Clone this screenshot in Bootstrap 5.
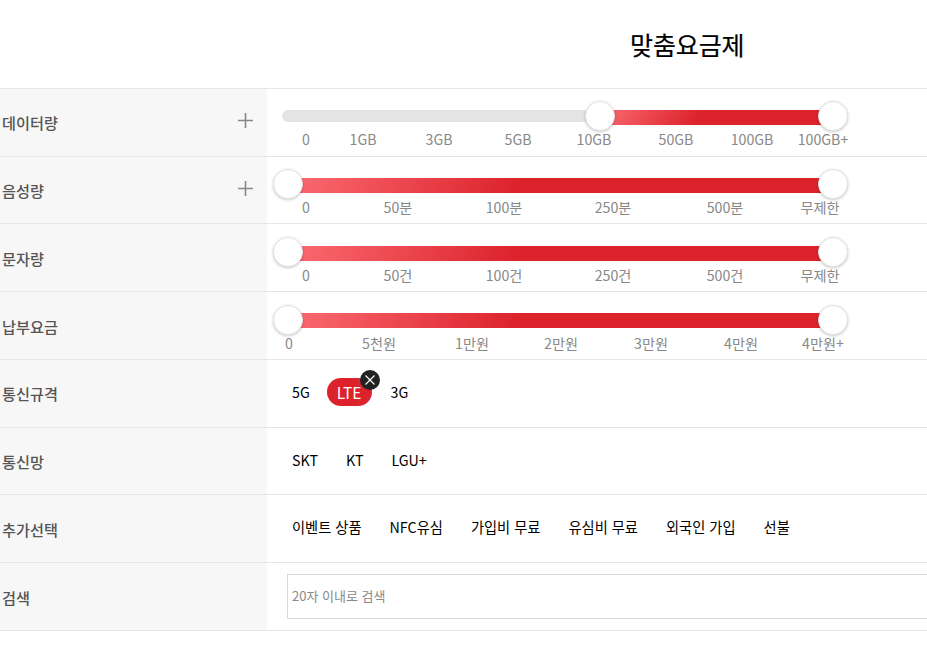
<!DOCTYPE html>
<html lang="ko"><head><meta charset="utf-8">
<link href="https://cdn.jsdelivr.net/npm/bootstrap@5.3.0/dist/css/bootstrap.min.css" rel="stylesheet">
<style>
html,body{height:658px;overflow:hidden;background:#fff}
body{font-family:"Noto Sans CJK KR","Noto Sans",sans-serif;color:#000}
.page-head{height:88.9px;border-bottom:1px solid #e6e6e6;padding-left:630px;padding-top:25px}
.page-title{font-size:25px;font-weight:400;line-height:38px;margin:0;letter-spacing:-.1px;-webkit-text-stroke:.2px #000}
.flt-row{height:67.75px;border-bottom:1px solid #e6e6e6;width:927px}
.flt-label{flex:0 0 267px;background:#f7f7f7;padding:1px 14px 0 2px;font-size:15.2px;font-weight:500;color:#555;height:100%}
.flt-label svg{display:block;margin-top:-5px}
.flt-body{flex:1 1 auto;min-width:0;height:100%;position:relative;overflow:hidden}
.slider{position:absolute;left:0;top:0;width:660px;height:100%}
.trk{position:absolute;height:15px;border-radius:8px}
.trk-bg{left:15px;width:330px;height:12px;background:#e4e4e4;border-radius:6px}
.trk-on{background:linear-gradient(118deg,#fc6c73 0%,#dc232c 42%,#dc232c 100%);border-radius:0}
.knob{position:absolute;width:30px;height:30px;margin-left:-15px;border-radius:50%;background:#fff;border:1px solid #e3e3e3;box-shadow:0 1px 3px rgba(0,0,0,.22)}
.tick{position:absolute;transform:translateX(-50%);font-size:14.2px;line-height:20px;color:#888;white-space:nowrap}
.opts{padding-left:15px;gap:8px;height:100%;padding-bottom:3px}
.opt{padding:0 10px;font-size:14.25px;line-height:28px;white-space:nowrap;color:#000;position:relative}
.opt-on{background:#dc232c;color:#fff;border-radius:14px;font-size:15.5px;margin:0 1px 0 -1px}
.opt-x{position:absolute;width:20px;height:20px;border-radius:50%;background:#222;display:flex;align-items:center;justify-content:center}
.srch{position:absolute;left:20px;top:11px;width:800px;height:45px;border:1px solid #d9d9d9;border-radius:0;font-size:13px;padding:0 0 2px 4px;font-family:inherit}
.srch::placeholder{color:#888;opacity:1}
</style></head><body>
<div class="page-head"><h1 class="page-title">맞춤요금제</h1></div>

<div class="flt-row d-flex">
 <div class="flt-label d-flex align-items-center justify-content-between"><span>데이터량</span><svg width="15" height="15" viewBox="0 0 15 15"><path d="M7.500 0v15M0 7.500h15" stroke="#888" stroke-width="1.6" fill="none"/></svg></div>
 <div class="flt-body"><div class="slider">
  <div class="trk trk-bg" style="top:21px"></div>
  <div class="trk trk-on" style="left:333px;width:233px;top:21px"></div>
  <div class="knob" style="left:333px;top:12px"></div><div class="knob" style="left:566px;top:12px"></div>
  <span class="tick" style="left:39px;top:40px">0</span><span class="tick" style="left:96px;top:40px">1GB</span><span class="tick" style="left:172px;top:40px">3GB</span><span class="tick" style="left:251px;top:40px">5GB</span><span class="tick" style="left:327px;top:40px">10GB</span><span class="tick" style="left:409px;top:40px">50GB</span><span class="tick" style="left:485px;top:40px">100GB</span><span class="tick" style="left:556px;top:40px">100GB+</span>
 </div></div>
</div>

<div class="flt-row d-flex">
 <div class="flt-label d-flex align-items-center justify-content-between"><span>음성량</span><svg width="15" height="15" viewBox="0 0 15 15"><path d="M7.500 0v15M0 7.500h15" stroke="#888" stroke-width="1.6" fill="none"/></svg></div>
 <div class="flt-body"><div class="slider">
  <div class="trk trk-on" style="left:21px;width:545px;top:21px"></div>
  <div class="knob" style="left:21px;top:12px"></div><div class="knob" style="left:566px;top:12px"></div>
  <span class="tick" style="left:39px;top:40px">0</span><span class="tick" style="left:131px;top:40px">50분</span><span class="tick" style="left:237px;top:40px">100분</span><span class="tick" style="left:346px;top:40px">250분</span><span class="tick" style="left:458px;top:40px">500분</span><span class="tick" style="left:553px;top:40px">무제한</span>
 </div></div>
</div>

<div class="flt-row d-flex">
 <div class="flt-label d-flex align-items-center"><span>문자량</span></div>
 <div class="flt-body"><div class="slider">
  <div class="trk trk-on" style="left:21px;width:545px;top:22px"></div>
  <div class="knob" style="left:21px;top:13px"></div><div class="knob" style="left:566px;top:13px"></div>
  <span class="tick" style="left:39px;top:41px">0</span><span class="tick" style="left:131px;top:41px">50건</span><span class="tick" style="left:237px;top:41px">100건</span><span class="tick" style="left:346px;top:41px">250건</span><span class="tick" style="left:458px;top:41px">500건</span><span class="tick" style="left:553px;top:41px">무제한</span>
 </div></div>
</div>

<div class="flt-row d-flex">
 <div class="flt-label d-flex align-items-center"><span>납부요금</span></div>
 <div class="flt-body"><div class="slider">
  <div class="trk trk-on" style="left:21px;width:545px;top:21px"></div>
  <div class="knob" style="left:21px;top:13px"></div><div class="knob" style="left:566px;top:13px"></div>
  <span class="tick" style="left:22px;top:41px">0</span><span class="tick" style="left:112px;top:41px">5천원</span><span class="tick" style="left:205px;top:41px">1만원</span><span class="tick" style="left:294px;top:41px">2만원</span><span class="tick" style="left:384px;top:41px">3만원</span><span class="tick" style="left:474px;top:41px">4만원</span><span class="tick" style="left:556px;top:41px">4만원+</span>
 </div></div>
</div>

<div class="flt-row d-flex">
 <div class="flt-label d-flex align-items-center"><span>통신규격</span></div>
 <div class="flt-body"><div class="opts d-flex align-items-center">
  <span class="opt">5G</span>
  <span class="opt opt-on">LTE</span>
  <span class="opt">3G</span>
 </div>
 <span class="opt-x" style="left:93px;top:10px"><svg width="10" height="10" viewBox="0 0 10 10"><path d="M.5.5l9 9M9.500.5l-9 9" stroke="#fff" stroke-width="1.1" fill="none"/></svg></span>
 </div>
</div>

<div class="flt-row d-flex">
 <div class="flt-label d-flex align-items-center"><span>통신망</span></div>
 <div class="flt-body"><div class="opts d-flex align-items-center"><span class="opt">SKT</span><span class="opt">KT</span><span class="opt">LGU+</span></div></div>
</div>

<div class="flt-row d-flex">
 <div class="flt-label d-flex align-items-center"><span>추가선택</span></div>
 <div class="flt-body"><div class="opts d-flex align-items-center"><span class="opt">이벤트 상품</span><span class="opt">NFC유심</span><span class="opt">가입비 무료</span><span class="opt">유심비 무료</span><span class="opt">외국인 가입</span><span class="opt">선불</span></div></div>
</div>

<div class="flt-row d-flex">
 <div class="flt-label d-flex align-items-center"><span>검색</span></div>
 <div class="flt-body"><input class="srch form-control" type="text" placeholder="20자 이내로 검색"></div>
</div>
<script src="https://cdn.jsdelivr.net/npm/bootstrap@5.3.0/dist/js/bootstrap.bundle.min.js"></script>
</body></html>
